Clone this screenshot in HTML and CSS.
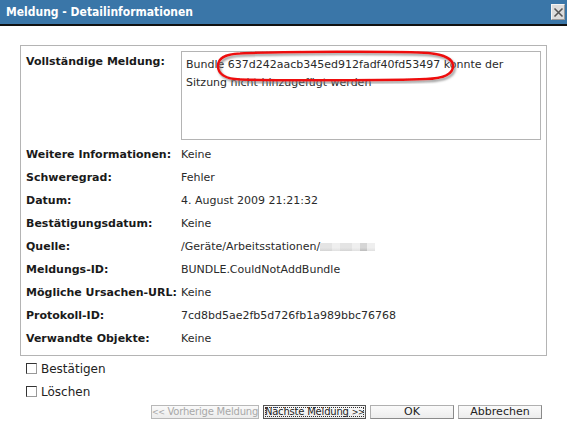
FILE: index.html
```html
<!DOCTYPE html>
<html lang="de">
<head>
<meta charset="utf-8">
<title>Meldung - Detailinformationen</title>
<link rel="stylesheet" href="styles.css">
</head>
<body>
<div class="titlebar">
  <span class="title">Meldung - Detailinformationen</span>
  <span class="close" aria-label="Schließen">
    <svg width="11" height="11" viewBox="0 0 11 11"><path d="M1.5 1.5 L9.5 9.5 M9.5 1.5 L1.5 9.5" stroke="#555" stroke-width="1.6" fill="none"/></svg>
  </span>
</div>
<div class="content">
  <div class="panel">
    <div class="grid">
      <div class="label first">Vollständige Meldung:</div>
      <div class="msgbox">
        <div class="msgtext">Bundle 637d242aacb345ed912fadf40fd53497 konnte der Sitzung nicht hinzugefügt werden</div>
        <svg class="circle" width="244" height="34" viewBox="0 0 244 34">
          <defs>
            <filter id="sh" x="-10%" y="-40%" width="120%" height="180%">
              <feDropShadow dx="1.5" dy="2" stdDeviation="1.2" flood-color="#777" flood-opacity="0.75"/>
            </filter>
          </defs>
          <path d="M26 3.5 C60 1.5 190 1 214 3 C232 4.5 239 10 239 16 C239 24 230 28.5 212 29 C180 30.5 60 30.5 26 29.5 C10 29 4 23 4 16 C4 8.5 12 4 26 3.5 Z" fill="none" stroke="#ee1010" stroke-width="2.6" filter="url(#sh)"/>
        </svg>
      </div>
      <div class="label">Weitere Informationen:</div><div class="value">Keine</div>
      <div class="label">Schweregrad:</div><div class="value">Fehler</div>
      <div class="label">Datum:</div><div class="value">4. August 2009 21:21:32</div>
      <div class="label">Bestätigungsdatum:</div><div class="value">Keine</div>
      <div class="label">Quelle:</div><div class="value">/Geräte/Arbeitsstationen/<span class="blur"><i class="b1"></i><i class="b2"></i><i class="b1"></i><i class="b2"></i><i class="b3"></i><i class="b2"></i></span></div>
      <div class="label">Meldungs-ID:</div><div class="value">BUNDLE.CouldNotAddBundle</div>
      <div class="label">Mögliche Ursachen-URL:</div><div class="value">Keine</div>
      <div class="label">Protokoll-ID:</div><div class="value">7cd8bd5ae2fb5d726fb1a989bbc76768</div>
      <div class="label">Verwandte Objekte:</div><div class="value">Keine</div>
    </div>
  </div>
  <label class="check"><input type="checkbox"><span>Bestätigen</span></label>
  <label class="check"><input type="checkbox"><span>Löschen</span></label>
  <div class="buttons">
    <button class="btn long prev" disabled><span class="arr">&lt;&lt;</span> Vorherige Meldung</button>
    <button class="btn long next">Nächste Meldung <span class="arr">&gt;&gt;</span></button>
    <button class="btn short">OK</button>
    <button class="btn short">Abbrechen</button>
  </div>
</div>
</body>
</html>
```
FILE: styles.css
```css
* { box-sizing: border-box; }
html, body { margin: 0; padding: 0; background: #fff; }
body {
  width: 567px;
  height: 443px;
  overflow: hidden;
  font-family: "DejaVu Sans", Verdana, sans-serif;
  font-size: 11px;
  color: #222;
}
.titlebar {
  height: 26px;
  background: #3a76a8;
  border-bottom: 2px solid #111;
  display: flex;
  align-items: center;
  justify-content: space-between;
  padding: 0 2px 1px 6px;
}
.title {
  color: #fff;
  font-family: "DejaVu Sans Condensed", "DejaVu Sans", sans-serif;
  font-weight: bold;
  font-size: 12px;
}
.close {
  width: 14px;
  height: 16px;
  background: #dcdcdc;
  border: 1px solid #9a9a9a;
  border-top-color: #f4f4f4;
  border-left-color: #f4f4f4;
  display: flex;
  align-items: center;
  justify-content: center;
  margin-top: 1px;
}
.content {
  padding: 19px 20px 0 20px;
}
.panel {
  border: 1px solid #b4b4b4;
}
.grid {
  display: grid;
  grid-template-columns: 155px 360px;
  grid-template-rows: 92px;
  grid-auto-rows: 23px;
  padding: 5px 5px 5px 5px;
}
.label {
  font-weight: bold;
  color: #1a1a1a;
  line-height: 23px;
  white-space: nowrap;
}
.label.first {
  line-height: 14px;
  padding-top: 4px;
}
.value {
  line-height: 23px;
  color: #2a2a2a;
  white-space: nowrap;
}
.msgbox {
  position: relative;
  height: 89px;
  border: 1px solid #b4b4b4;
}
.msgtext {
  padding: 4px 4px;
  line-height: 18px;
  color: #2a2a2a;
}
.circle {
  position: absolute;
  left: 32px;
  top: -2px;
}
.blur {
  display: inline-flex;
  align-items: flex-end;
  height: 8px;
  vertical-align: -1px;
}
.blur i { display: block; height: 8px; }
.b1 { width: 12px; background: linear-gradient(#e4e4e4 60%, #d4d4d4); }
.b2 { width: 8px; background: linear-gradient(#efefef 60%, #e0e0e0); }
.b3 { width: 7px; background: linear-gradient(#d6d6d6 60%, #bcbcbc); }
.check {
  display: flex;
  align-items: center;
  height: 23px;
  padding-left: 6px;
  font-size: 12px;
  color: #222;
}
.check:first-of-type { margin-top: 1px; }
.check input {
  appearance: none;
  -webkit-appearance: none;
  width: 11px;
  height: 11px;
  margin: 0 4px 0 0;
  border: 1px solid #333;
  border-right-color: #999;
  border-bottom-color: #999;
  background: #fff;
}
.buttons {
  display: flex;
  justify-content: flex-end;
  gap: 4px;
  margin-top: 2px;
  padding-right: 5px;
}
.btn {
  height: 14px;
  padding: 0;
  margin: 0;
  font-family: "DejaVu Sans", Verdana, sans-serif;
  font-size: 11px;
  line-height: 12px;
  color: #222;
  background: linear-gradient(#fafafa, #ececec);
  border: 1px solid #8a8a8a;
  border-top-color: #b0b0b0;
  border-left-color: #b0b0b0;
  white-space: nowrap;
  overflow: hidden;
}
.btn.long { font-size: 10px; letter-spacing: -0.2px; }
.btn .arr { font-size: 8px; letter-spacing: -0.5px; }
.prev { width: 108px; color: #a8a8a8; border-color: #b8b8b8; }
.next { width: 103px; outline: 1px dotted #333; outline-offset: -3px; border-color: #555; }
.short { width: 84px; }
```
